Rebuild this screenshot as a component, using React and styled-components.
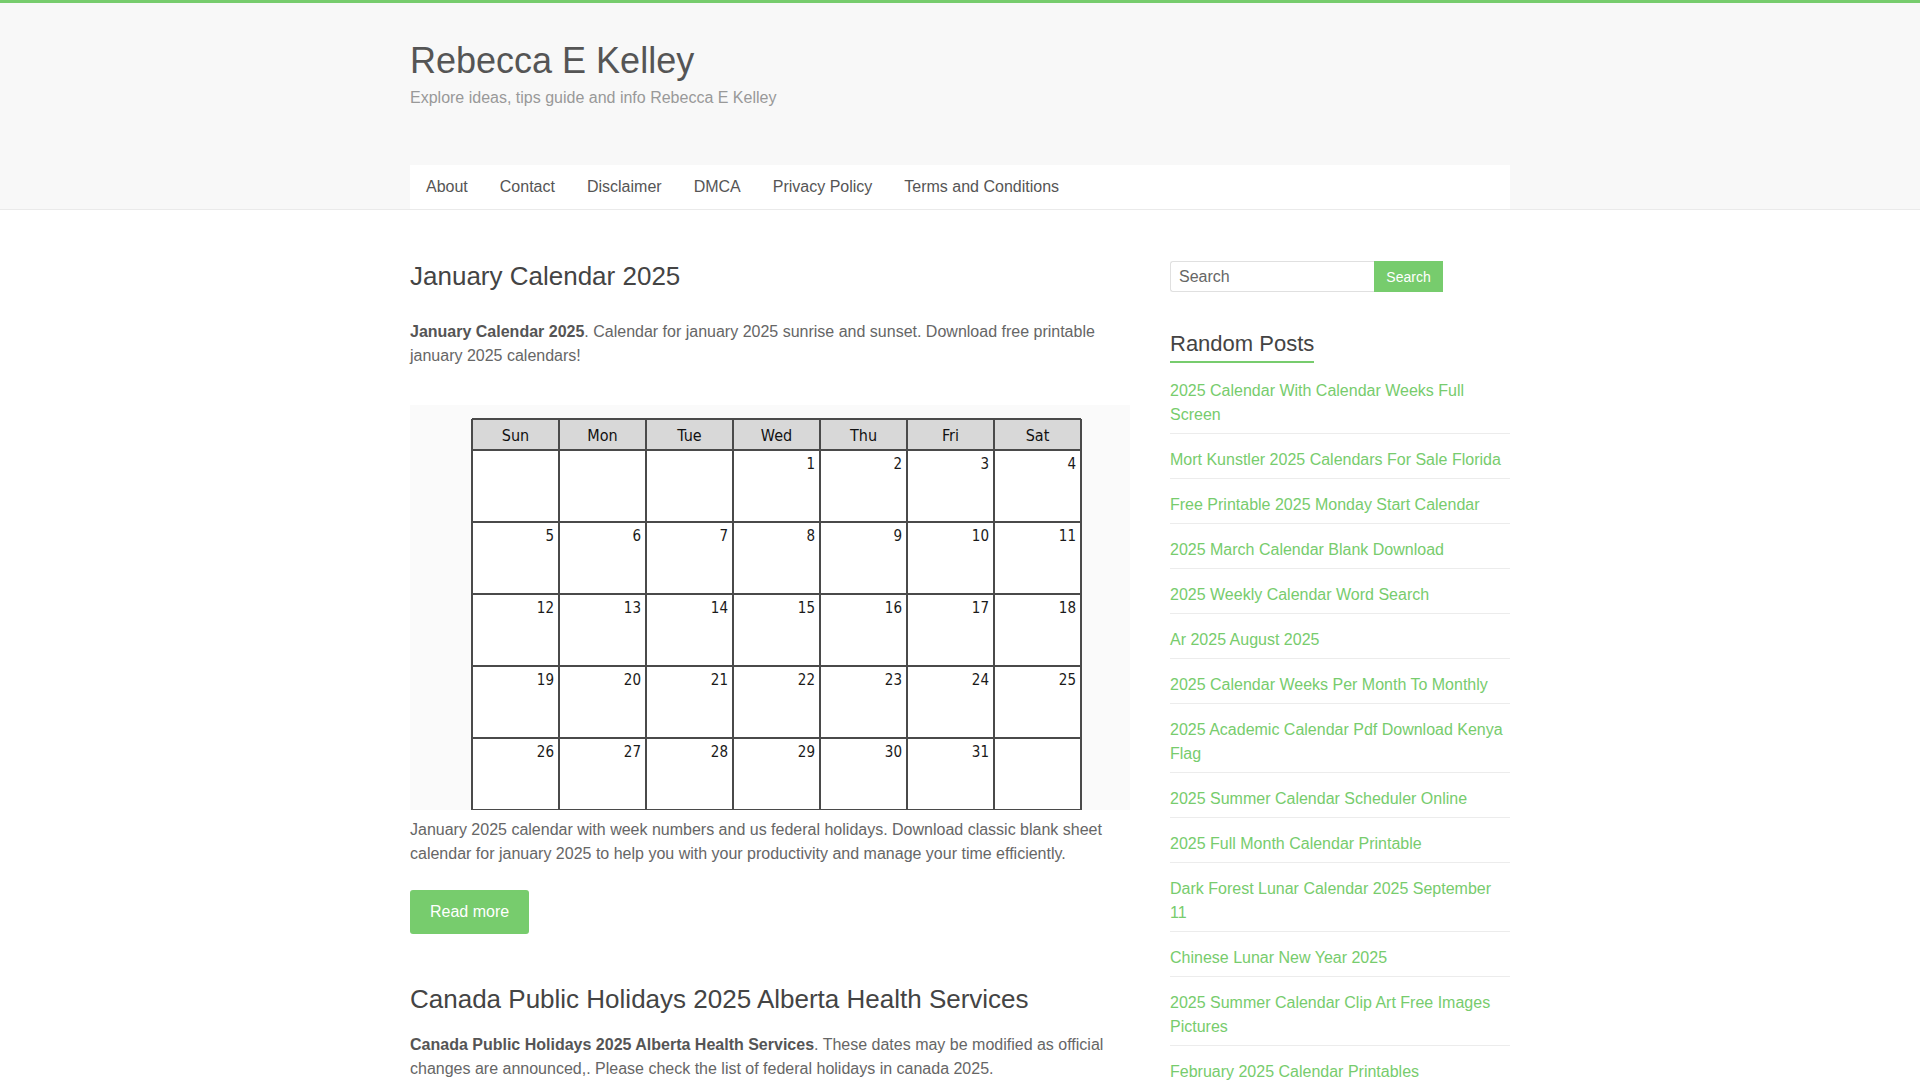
import React from "react";
import styled, { createGlobalStyle } from "styled-components";

const green = "#77cc6d";

const GlobalStyle = createGlobalStyle`
  html {
    overflow-y: scroll;
  }
  body {
    margin: 0;
    background: #fff;
    font-family: "Liberation Sans", Arial, sans-serif;
    color: #666;
  }
  a {
    text-decoration: none;
  }
`;

const Header = styled.header`
  background: #f8f8f8;
  border-top: 3px solid ${green};
  border-bottom: 1px solid #eaeaea;
`;

const Container = styled.div`
  width: 1100px;
  margin: 0 auto;
`;

const Branding = styled.div`
  padding: 36px 0 55px;
  h1 {
    margin: 0;
    font-size: 36px;
    line-height: 43px;
    font-weight: normal;
    color: #555;
  }
  p {
    margin: 4px 0 0;
    font-size: 16px;
    line-height: 24px;
    color: #999;
  }
`;

const Nav = styled.nav`
  display: flex;
  background: #fff;
  height: 44px;
  align-items: center;
  a {
    padding: 0 16px;
    font-size: 16px;
    line-height: 44px;
    color: #555;
  }
`;

const Main = styled.div`
  display: flex;
  justify-content: space-between;
  padding-top: 51px;
`;

const Primary = styled.main`
  width: 720px;
`;

const Article = styled.article`
  margin-bottom: 50px;
`;

const PostTitle = styled.h2`
  margin: 0 0 ${(p) => p.$gap}px;
  font-size: 26px;
  line-height: 31px;
  font-weight: normal;
  color: #444;
`;

const Excerpt = styled.p`
  margin: 0 0 ${(p) => p.$after || 0}px;
  font-size: 16px;
  line-height: 24px;
  color: #666;
  strong {
    color: #555;
  }
`;

const Figure = styled.div`
  width: 720px;
  height: 405px;
  margin-bottom: 8px;
  svg {
    display: block;
  }
`;

const ReadMore = styled.a`
  display: inline-block;
  margin-top: 24px;
  padding: 10px 20px;
  background: ${green};
  color: #fff;
  font-size: 16px;
  line-height: 24px;
  border-radius: 3px;
`;

const Sidebar = styled.aside`
  width: 340px;
`;

const SearchForm = styled.form`
  display: flex;
  margin: 0 0 39px;
  input {
    width: 204px;
    height: 31px;
    box-sizing: border-box;
    border: 1px solid #e0e0e0;
    border-right: none;
    border-radius: 3px 0 0 3px;
    padding: 0 8px;
    font-family: inherit;
    font-size: 16px;
    color: #666;
    outline: none;
  }
  input::placeholder {
    color: #666;
  }
  button {
    width: 69px;
    height: 31px;
    border: none;
    background: ${green};
    color: #fff;
    font-family: inherit;
    font-size: 14px;
    cursor: pointer;
  }
`;

const WidgetTitle = styled.h3`
  display: inline-block;
  margin: 0;
  padding-bottom: 4px;
  border-bottom: 2px solid ${green};
  font-size: 22px;
  line-height: 26px;
  font-weight: normal;
  color: #444;
`;

const PostList = styled.ul`
  list-style: none;
  margin: 2px 0 0;
  padding: 0;
  li {
    padding: 14px 0 6px;
    border-bottom: 1px solid #ececec;
    font-size: 16px;
    line-height: 24px;
  }
  a {
    color: ${green};
  }
`;

const days = ["Sun", "Mon", "Tue", "Wed", "Thu", "Fri", "Sat"];
const calFont = "'DejaVu Sans Condensed', 'DejaVu Sans', sans-serif";

const CalendarImage = () => {
  const left = 62;
  const top = 14;
  const col = 87;
  const head = 31;
  const row = 72;
  const cells = [];
  for (let d = 1; d <= 31; d++) {
    const idx = d + 2;
    const c = idx % 7;
    const r = Math.floor(idx / 7);
    cells.push(
      <text
        key={d}
        x={left + (c + 1) * col - 5}
        y={top + head + r * row + 19}
        textAnchor="end"
        fontSize="15"
        fontFamily={calFont}
        fill="#1a1a1a"
      >
        {d}
      </text>
    );
  }
  const gridBottom = top + head + row * 5;
  return (
    <svg width="720" height="405" viewBox="0 0 720 405">
      <rect width="720" height="405" fill="#fafafa" />
      <rect x={left} y={top} width={col * 7} height={gridBottom - top} fill="#fff" />
      <rect x={left} y={top} width={col * 7} height={head} fill="#d8d8d8" />
      {days.map((d, i) => (
        <text
          key={d}
          x={left + i * col + col / 2}
          y={top + 22}
          textAnchor="middle"
          fontSize="16"
          fontFamily={calFont}
          fill="#111"
        >
          {d}
        </text>
      ))}
      {cells}
      <g stroke="#4a4a4a" strokeWidth="2">
        {Array.from({ length: 8 }, (_, i) => (
          <line key={"v" + i} x1={left + i * col} y1={top} x2={left + i * col} y2={gridBottom} />
        ))}
        <line x1={left} y1={top} x2={left + col * 7} y2={top} />
        {Array.from({ length: 6 }, (_, i) => (
          <line
            key={"h" + i}
            x1={left}
            y1={top + head + i * row}
            x2={left + col * 7}
            y2={top + head + i * row}
          />
        ))}
      </g>
    </svg>
  );
};

const randomPosts = [
  "2025 Calendar With Calendar Weeks Full Screen",
  "Mort Kunstler 2025 Calendars For Sale Florida",
  "Free Printable 2025 Monday Start Calendar",
  "2025 March Calendar Blank Download",
  "2025 Weekly Calendar Word Search",
  "Ar 2025 August 2025",
  "2025 Calendar Weeks Per Month To Monthly",
  "2025 Academic Calendar Pdf Download Kenya Flag",
  "2025 Summer Calendar Scheduler Online",
  "2025 Full Month Calendar Printable",
  "Dark Forest Lunar Calendar 2025 September 11",
  "Chinese Lunar New Year 2025",
  "2025 Summer Calendar Clip Art Free Images Pictures",
  "February 2025 Calendar Printables",
];

const navItems = ["About", "Contact", "Disclaimer", "DMCA", "Privacy Policy", "Terms and Conditions"];

const App = () => {
  return (
    <>
      <GlobalStyle />
      <Header>
        <Container>
          <Branding>
            <h1>Rebecca E Kelley</h1>
            <p>Explore ideas, tips guide and info Rebecca E Kelley</p>
          </Branding>
          <Nav>
            {navItems.map((n) => (
              <a href="#" key={n}>
                {n}
              </a>
            ))}
          </Nav>
        </Container>
      </Header>
      <Container>
        <Main>
          <Primary>
            <Article>
              <PostTitle $gap={28}>January Calendar 2025</PostTitle>
              <Excerpt $after={37}>
                <strong>January Calendar 2025</strong>. Calendar for january 2025 sunrise and sunset.
                Download free printable january 2025 calendars!
              </Excerpt>
              <Figure>
                <CalendarImage />
              </Figure>
              <Excerpt>
                January 2025 calendar with week numbers and us federal holidays. Download classic blank
                sheet calendar for january 2025 to help you with your productivity and manage your time
                efficiently.
              </Excerpt>
              <ReadMore href="#">Read more</ReadMore>
            </Article>
            <Article>
              <PostTitle $gap={18}>Canada Public Holidays 2025 Alberta Health Services</PostTitle>
              <Excerpt>
                <strong>Canada Public Holidays 2025 Alberta Health Services</strong>. These dates may be
                modified as official changes are announced,. Please check the list of federal holidays in
                canada 2025.
              </Excerpt>
              <ReadMore href="#">Read more</ReadMore>
            </Article>
          </Primary>
          <Sidebar>
            <SearchForm onSubmit={(e) => e.preventDefault()}>
              <input type="text" placeholder="Search" />
              <button type="submit">Search</button>
            </SearchForm>
            <WidgetTitle>Random Posts</WidgetTitle>
            <PostList>
              {randomPosts.map((p) => (
                <li key={p}>
                  <a href="#">{p}</a>
                </li>
              ))}
            </PostList>
          </Sidebar>
        </Main>
      </Container>
    </>
  );
};

export default App;
